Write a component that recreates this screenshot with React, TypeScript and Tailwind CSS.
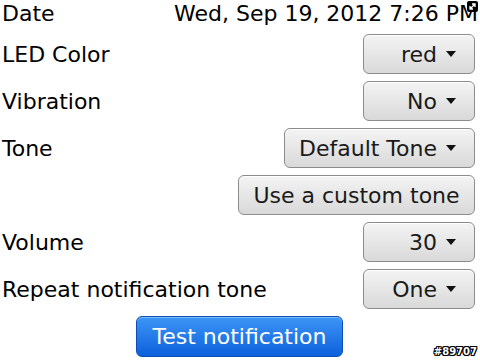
import React from 'react';

const font = { fontFamily: '"DejaVu Sans", "Liberation Sans", sans-serif' };

function Caret() {
  return (
    <svg width="10" height="6" viewBox="0 0 10 6" className="shrink-0">
      <path d="M0 0h10L5 6z" fill="#111" />
    </svg>
  );
}

function Dropdown({ value, width }: { value: string; width: string }) {
  return (
    <button
      className={`flex h-[40px] ${width} items-center justify-end gap-[9px] rounded-[6px] border border-[#8c8c8c] bg-gradient-to-b from-[#f4f4f4] to-[#d9d9d9] pr-[18px] text-[22px] text-[#1a1a1a] shadow-[inset_0_1px_0_#ffffff]`}
    >
      <span>{value}</span>
      <Caret />
    </button>
  );
}

function Row({ label, children }: { label?: string; children: React.ReactNode }) {
  return (
    <div className="flex h-[40px] items-center justify-between">
      <span className="text-[22px] text-black">{label}</span>
      {children}
    </div>
  );
}

export default function App() {
  return (
    <div
      className="relative flex h-[360px] w-[480px] flex-col gap-[7px] overflow-hidden bg-white pl-[2px] pr-[5px]"
      style={font}
    >
      {/* date row */}
      <div className="flex h-[27px] items-center justify-between">
        <span className="text-[22px] text-black">Date</span>
        <span className="mr-[-3px] text-[22px] text-black">Wed, Sep 19, 2012 7:26 PM</span>
      </div>

      <Row label="LED Color">
        <Dropdown value="red" width="w-[112px]" />
      </Row>
      <Row label="Vibration">
        <Dropdown value="No" width="w-[112px]" />
      </Row>
      <Row label="Tone">
        <Dropdown value="Default Tone" width="w-[191px]" />
      </Row>
      <Row>
        <button className="flex h-[40px] w-[237px] items-center justify-center rounded-[6px] border border-[#8c8c8c] bg-gradient-to-b from-[#f4f4f4] to-[#d9d9d9] text-[22px] text-[#1a1a1a] shadow-[inset_0_1px_0_#ffffff]">
          Use a custom tone
        </button>
      </Row>
      <Row label="Volume">
        <Dropdown value="30" width="w-[112px]" />
      </Row>
      <Row label="Repeat notification tone">
        <Dropdown value="One" width="w-[112px]" />
      </Row>

      <div className="flex justify-center pl-[2px]">
        <button className="flex h-[41px] w-[207px] items-center justify-center rounded-[6px] border border-[#0b4fb3] bg-gradient-to-b from-[#3d95f5] to-[#0a60dc] text-[22px] text-white shadow-[inset_0_1px_0_#7cb8ff]">
          Test notification
        </button>
      </div>

      {/* expand icon over top-right corner */}
      <div className="absolute right-[2px] top-[1px] flex h-[11px] w-[11px] items-center justify-center rounded-[2px] bg-black">
        <svg width="9" height="9" viewBox="0 0 9 9">
          <path d="M2 7L7 2M4 2h3v3M2 4v3h3" stroke="#fff" strokeWidth="1.3" fill="none" />
        </svg>
      </div>

      {/* build tag */}
      <span
        className="absolute bottom-[3px] right-[3px] text-[10px] font-bold leading-none text-white"
        style={{
          textShadow:
            '1px 0 0 #000, -1px 0 0 #000, 0 1px 0 #000, 0 -1px 0 #000, 1px 1px 0 #000, -1px -1px 0 #000, 1px -1px 0 #000, -1px 1px 0 #000',
        }}
      >
        #89707
      </span>
    </div>
  );
}
